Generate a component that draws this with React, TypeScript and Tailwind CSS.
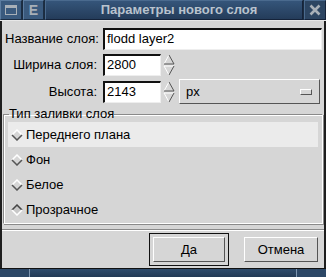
import React from "react";

const raised = "border border-t-white border-l-white border-b-[#555] border-r-[#555]";

function Diamond({ on }: { on?: boolean }) {
  const top = on ? "#444" : "#fff";
  const bottom = on ? "#fff" : "#555";
  return (
    <svg width="12" height="12" viewBox="0 0 12 12" className="shrink-0">
      <polygon points="6,1 11,6 6,11 1,6" fill={on ? "#c8c8c8" : "#d6d6d6"} />
      <polyline points="1,6 6,1 11,6" fill="none" stroke={top} strokeWidth="1.5" />
      <polyline points="1,6 6,11 11,6" fill="none" stroke={bottom} strokeWidth="1.5" />
    </svg>
  );
}

function Spin() {
  return (
    <svg width="12" height="22" viewBox="0 0 12 22" className="shrink-0 ml-[-4px]">
      <polyline points="1,10 6,1" fill="none" stroke="#fff" strokeWidth="1" />
      <polyline points="6,1 11,10 1,10" fill="none" stroke="#555" strokeWidth="1" />
      <polyline points="1,12 11,12" fill="none" stroke="#fff" strokeWidth="1" />
      <polyline points="1,12 6,21" fill="none" stroke="#fff" strokeWidth="1" />
      <polyline points="6,21 11,12" fill="none" stroke="#555" strokeWidth="1" />
    </svg>
  );
}

export default function App() {
  const fills = ["Переднего плана", "Фон", "Белое", "Прозрачное"];

  return (
    <div className="w-[326px] h-[277px] flex flex-col bg-[#d6d6d6] text-[13px] text-black font-['Liberation_Sans',Arial,sans-serif] overflow-hidden">
      {/* title bar */}
      <div className="h-[21px] flex gap-px bg-[#1b2c40] border-b border-[#e8e8e8] shrink-0">
        <div className="w-[22px] flex items-center justify-center bg-[#3a5a7e] border border-t-[#5b7ca0] border-l-[#5b7ca0] border-b-[#1c2e44] border-r-[#1c2e44]">
          <div className="w-[12px] h-[10px] border border-[#a8b0b8] border-t-[3px]" />
        </div>
        <div className="w-[21px] flex items-center justify-center bg-[#3a5a7e] border border-t-[#5b7ca0] border-l-[#5b7ca0] border-b-[#1c2e44] border-r-[#1c2e44] text-[#a8b0b8] font-bold text-[14px] leading-none">
          E
        </div>
        <div className="flex-1 flex items-center justify-center bg-gradient-to-b from-[#35557a] to-[#243c5a] border border-t-[#4a6a8e] border-l-[#4a6a8e] border-b-[#15233a] border-r-[#15233a] text-[#b9c3ce] font-bold text-[13px] pl-[10px]">
          Параметры нового слоя
        </div>
        <div className="w-[22px] flex items-center justify-center bg-[#2c4562] border border-t-[#4a6a8e] border-l-[#4a6a8e] border-b-[#15233a] border-r-[#15233a]">
          <svg width="12" height="12" viewBox="0 0 12 12">
            <path d="M1.5 1.5 L10.5 10.5 M10.5 1.5 L1.5 10.5" stroke="#a8b0b8" strokeWidth="2.6" />
          </svg>
        </div>
      </div>

      {/* body */}
      <div className="flex-1 flex flex-col border-l-2 border-r-2 border-[#1e1e1e] pt-[6px]">
        <div className="flex flex-col gap-[3px] pl-[3px] pr-[2px]">
          <div className="h-[23px] flex items-center gap-[6px]">
            <span className="w-[92px] text-right whitespace-nowrap">Название слоя:</span>
            <div className="flex-1 h-[22px] bg-white border-t-2 border-l-2 border-[#111] border-b border-r border-b-[#eee] border-r-[#eee] px-[2px] flex items-center">
              flodd layer2
            </div>
          </div>
          <div className="h-[23px] flex items-center gap-[6px]">
            <span className="w-[92px] text-right whitespace-nowrap">Ширина слоя:</span>
            <div className="w-[58px] h-[22px] bg-white border-t-2 border-l-2 border-[#111] border-b border-r border-b-[#eee] border-r-[#eee] px-[2px] flex items-center">
              2800
            </div>
            <Spin />
          </div>
          <div className="h-[25px] flex items-center gap-[6px]">
            <span className="w-[92px] text-right whitespace-nowrap">Высота:</span>
            <div className="w-[58px] h-[22px] bg-white border-t-2 border-l-2 border-[#111] border-b border-r border-b-[#eee] border-r-[#eee] px-[2px] flex items-center">
              2143
            </div>
            <Spin />
            <div className={`ml-[-2px] w-[141px] h-[25px] flex items-center justify-between pl-[6px] pr-[7px] ${raised}`}>
              <span>px</span>
              <div className={`w-[12px] h-[6px] ${raised}`} />
            </div>
          </div>
        </div>

        <fieldset className="mt-[3px] mx-[1px] border border-t-[#8a8a8a] border-l-[#8a8a8a] border-b-white border-r-white shadow-[inset_1px_1px_0_#fff,1px_1px_0_#8a8a8a] px-[4px] pt-0 pb-[1px]">
          <legend className="px-0 ml-[1px] leading-[14px]">Тип заливки слоя</legend>
          <div className="flex flex-col pt-[1px]">
            {fills.map((f, i) => (
              <div
                key={f}
                className={`h-[25px] flex items-center gap-[3px] pl-[3px] ${i === 0 ? "bg-[#ebebeb]" : ""}`}
              >
                <Diamond on={i === 3} />
                <span>{f}</span>
              </div>
            ))}
          </div>
        </fieldset>

        <div className="mt-[5px] h-[2px] border-t border-[#8a8a8a] border-b border-b-white" />

        <div className="flex-1 flex items-center justify-end gap-[15px] pr-[6px]">
          <div className="w-[80px] h-[33px] border border-[#111] p-[3px]">
            <div className={`h-full flex items-center justify-center ${raised}`}>Да</div>
          </div>
          <div className={`w-[74px] h-[25px] flex items-center justify-center ${raised}`}>Отмена</div>
        </div>
      </div>

      {/* bottom border */}
      <div className="h-[9px] shrink-0 flex border-t border-[#111] bg-[#2c4766]">
        <div className="w-[30px] border-r border-[#7d95b0]" />
        <div className="flex-1 border-r border-[#7d95b0] bg-gradient-to-b from-[#2f4c6c] to-[#233a55]" />
        <div className="w-[29px]" />
      </div>
    </div>
  );
}
